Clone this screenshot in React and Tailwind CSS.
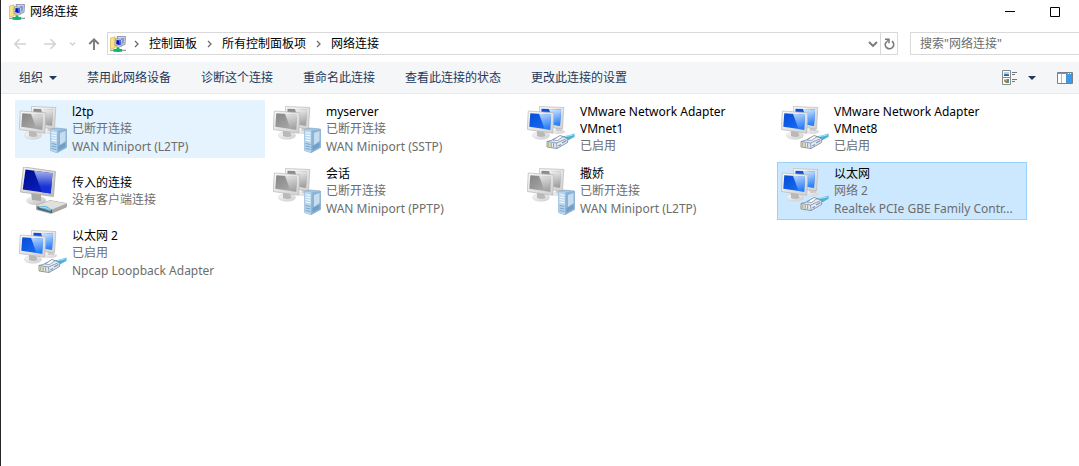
import { useId, useState } from 'react';

const CONNECTIONS = [
  { id: 1, name: 'l2tp', lines: ['已断开连接', 'WAN Miniport (L2TP)'], kind: 'vpn' },
  { id: 2, name: 'myserver', lines: ['已断开连接', 'WAN Miniport (SSTP)'], kind: 'vpn' },
  { id: 3, name: 'VMware Network Adapter VMnet1', lines: ['已启用'], kind: 'lan' },
  { id: 4, name: 'VMware Network Adapter VMnet8', lines: ['已启用'], kind: 'lan' },
  { id: 5, name: '传入的连接', lines: ['没有客户端连接'], kind: 'incoming' },
  { id: 6, name: '会话', lines: ['已断开连接', 'WAN Miniport (PPTP)'], kind: 'vpn' },
  { id: 7, name: '撒娇', lines: ['已断开连接', 'WAN Miniport (L2TP)'], kind: 'vpn' },
  { id: 8, name: '以太网', lines: ['网络 2', 'Realtek PCIe GBE Family Contr...'], kind: 'lan' },
  { id: 9, name: '以太网 2', lines: ['已启用', 'Npcap Loopback Adapter'], kind: 'lan' },
];

const COMMANDS = ['禁用此网络设备', '诊断这个连接', '重命名此连接', '查看此连接的状态', '更改此连接的设置'];

const CRUMBS = ['控制面板', '所有控制面板项', '网络连接'];

function NetworkIcon() {
  return (
    <svg width="16" height="16" viewBox="0 0 16 16" className="shrink-0">
      <path d="M.5 2 5 .8V12L.5 12.800z" fill="#f8e38a" stroke="#d9b54b" strokeWidth=".7" />
      <path d="M5 2h3v9.500H5z" fill="#f3d768" />
      <path d="M7 .5h8.500L15 8.500 10 10z" fill="#ccd3e6" stroke="#8089a3" strokeWidth=".8" />
      <path d="M11 2h3.200l-.5 5.500H11z" fill="#8a9ad6" />
      <path d="M5.300 2.800 12.200 3.500 11.600 10.500 5 9.500z" fill="#e3e6ee" stroke="#8b93a3" strokeWidth=".8" />
      <path d="M6.500 4 11 4.500 10.500 9.200 6.200 8.300z" fill="#0b12c0" />
      <path d="M8.800 4.300 11 4.500 10.500 9.200 9.600 9z" fill="#3b73ec" />
      <path d="M0 14.400h16" stroke="#9aa4aa" strokeWidth="1.400" />
      <path d="M3.500 13h8.500v2.800H3.500zM6.500 11.300h3V16h-3z" fill="#0fb868" />
    </svg>
  );
}

function Monitors({ id, off }) {
  return (
    <>
      <defs>
        <linearGradient id={id + 's'} x1="0" y1="0" x2="1" y2="1">
          <stop offset="0" stopColor={off ? '#858585' : '#0a4bd6'} />
          <stop offset="1" stopColor={off ? '#b0b0b0' : '#1672fb'} />
        </linearGradient>
        <linearGradient id={id + 'g'} x1="0" y1="0" x2="0.2" y2="1">
          <stop offset="0" stopColor={off ? '#f2f2f2' : '#d9ecff'} />
          <stop offset="1" stopColor={off ? '#a2a2a2' : '#2c80f8'} />
        </linearGradient>
        <linearGradient id={id + 'f'} x1="0" y1="0" x2="1" y2="1">
          <stop offset="0" stopColor="#fafafa" />
          <stop offset="1" stopColor="#cfcfcf" />
        </linearGradient>
      </defs>
      <ellipse cx="31" cy="26.500" rx="7" ry="2.500" fill={`url(#${id}f)`} />
      <path d="M28 21h6l1 5h-6z" fill="#cecece" />
      <path d="M12.500 1.500 36.800 2.500 35.500 24 13 21z" fill={`url(#${id}f)`} stroke="#b9b9b9" strokeWidth=".7" />
      <path d="M14.500 3.700 34 4.500 33 20.800 14 18z" fill={`url(#${id}s)`} />
      <path d="M22 4 34 4.500 33 20.800 27 20z" fill={`url(#${id}g)`} />
      <ellipse cx="14" cy="30.500" rx="8.500" ry="3.800" fill={`url(#${id}f)`} stroke="#cdcdcd" strokeWidth=".5" />
      <path d="M10 25l7 1 1.500 5c-3 1.500-6 1-8.500 0z" fill="#b9b9b9" />
      <path d="M1.300 6 26.800 7.800 25.800 28.300.3 24.500z" fill={`url(#${id}f)`} stroke="#b9b9b9" strokeWidth=".7" />
      <path d="M3.300 8.200 24 9.700 23.200 24.800 2.300 21.800z" fill={`url(#${id}s)`} />
      <path d="M12 8.800 24 9.700 23.200 24.800 17.500 24z" fill={`url(#${id}g)`} opacity=".85" />
    </>
  );
}

function VpnIcon() {
  const id = useId();
  return (
    <svg width="48" height="48" viewBox="0 0 48 48" className="shrink-0">
      <Monitors id={id} off />
      <path d="M31.500 24.500 37 23 47.500 24 47.500 42.500 38 47.700 31.500 45.500z" fill="#a3c5e0" stroke="#7ba2c4" strokeWidth=".6" />
      <path d="M31.500 24.500 38.500 25.500 38 47.700 31.500 45.500z" fill="#b7d6ed" />
      <path d="M38.500 25.500 47.500 24 47.500 42.500 38 47.700z" fill="#8ab3d6" />
      <path d="M41 28 46.500 26v10L41 40z" fill="#d0e4f3" opacity=".85" />
      <path d="M32.500 27.500l5 .8M32.500 30l5 .8M32.500 32.500l5 .8M32.500 35l5 .8" stroke="#f4fafe" strokeWidth="1.200" />
      <path d="M32.500 38.500l5 1M32.500 41l5 1M32.500 43.500l5 1" stroke="#6797c0" strokeWidth=".8" />
      <path d="M39.500 41 46.500 37.500v4l-7 4z" fill="#5787b5" opacity=".5" />
    </svg>
  );
}

function LanIcon() {
  const id = useId();
  return (
    <svg width="48" height="48" viewBox="0 0 48 48" className="shrink-0">
      <Monitors id={id} />
      <path d="M35 31.500c4-.5 8-1.500 12.500-3v3.500c-2.500.8-4 2.500-7.500 3.500z" fill="#4bb4da" />
      <path d="M38 31.500c3-.3 6-1 8.500-1.800" stroke="#b0e6f6" strokeWidth="1" fill="none" />
      <path d="M20 36.500 24 35.500 33 31 41 33 40.500 37.500 30 43.500 20 42z" fill="#e2eaf3" stroke="#71829f" strokeWidth=".8" />
      <path d="M20 36.500 29.500 38 41 33M29.500 38 30 43.500" fill="none" stroke="#71829f" strokeWidth=".7" />
      <path d="M26 35 33 30.500 36 31.500 30.500 35.500z" fill="#fff" stroke="#71829f" strokeWidth=".7" />
      <path d="M21.800 37.500v4M24.200 38v4M26.600 38.300v4" stroke="#b1a847" strokeWidth="1.100" />
      <path d="M31.500 41 34 39.500M35 38 39.500 35.500" stroke="#8296b3" strokeWidth="1.400" />
    </svg>
  );
}

function IncomingIcon() {
  const id = useId();
  return (
    <svg width="48" height="48" viewBox="0 0 48 48" className="shrink-0">
      <defs>
        <linearGradient id={id + 's'} x1="0" y1="0" x2="1" y2="1">
          <stop offset="0" stopColor="#000b88" />
          <stop offset="1" stopColor="#0b24d2" />
        </linearGradient>
        <linearGradient id={id + 'g'} x1="0" y1="0" x2="0" y2="1">
          <stop offset="0" stopColor="#c3cef7" />
          <stop offset=".7" stopColor="#1a35da" />
        </linearGradient>
        <linearGradient id={id + 'f'} x1="0" y1="0" x2="1" y2="1">
          <stop offset="0" stopColor="#f6f6f4" />
          <stop offset="1" stopColor="#b9b9b7" />
        </linearGradient>
      </defs>
      <ellipse cx="17" cy="33.500" rx="10" ry="4.500" fill={`url(#${id}f)`} />
      <path d="M12 25 22 27 22 34 13 33z" fill="#a9a9a7" />
      <path d="M4.500 0 36.500 4.500 34.500 29.500 1.500 25z" fill={`url(#${id}f)`} stroke="#a5a5a3" strokeWidth=".7" />
      <path d="M6.500 2.500 33.500 6.200 31.800 26.500 3.800 22.500z" fill={`url(#${id}s)`} />
      <path d="M15 3.700 33.500 6.200 31.800 26.500 23 25.200z" fill={`url(#${id}g)`} opacity=".85" />
      <path d="M17.500 38.500 31 33.500 47.500 36.500 47.500 40 32 46.500 17.500 42.500z" fill="#a9a9a7" stroke="#8e8e8c" strokeWidth=".6" />
      <path d="M17.500 38.500 31 33.500 47.500 36.500 33 42.500z" fill="#e0e0de" />
      <path d="M18.500 39.500 33 42.800V46L18.500 42.300z" fill="#41606f" />
      <path d="M19.500 40.500c4-2.500 8-2.500 12.500 2v2z" fill="#67b6dc" />
      <path d="M21.500 40.500c3-1 6 .2 9 2" stroke="#cdeaf5" strokeWidth=".8" fill="none" />
    </svg>
  );
}

const ICONS = { vpn: VpnIcon, lan: LanIcon, incoming: IncomingIcon };

function Chevron() {
  return (
    <svg width="5" height="8" viewBox="0 0 5 8" className="shrink-0">
      <path d="M1 1l3 3-3 3" fill="none" stroke="#6b6b6b" strokeWidth="1.300" />
    </svg>
  );
}

function Caret() {
  return (
    <svg width="8" height="4" viewBox="0 0 8 4">
      <path d="M0 0h8L4 4z" fill="#1e395b" />
    </svg>
  );
}

function Connection({ item, hovered, selected, onSelect }) {
  const Icon = ICONS[item.kind];
  let state = 'border-transparent';
  if (hovered) state = 'border-[#e5f3ff] bg-[#e5f3ff]';
  if (selected) state = 'border-[#99d1ff] bg-[#cce8ff]';

  return (
    <li>
      <button
        onClick={onSelect}
        aria-pressed={selected}
        className={`flex h-[58px] w-[250px] items-center gap-[5px] border pl-[3px] pr-1 text-left ${state}`}
      >
        <Icon />
        <span className="min-w-0 flex-1">
          <span className="block leading-[17px] text-black">{item.name}</span>
          {item.lines.map((line) => (
            <span key={line} className="block whitespace-nowrap leading-[18px] text-[#6d6d6d]">{line}</span>
          ))}
        </span>
      </button>
    </li>
  );
}

export default function App() {
  const [selected, setSelected] = useState(8);

  return (
    <div className="min-h-screen border-l border-[#26262b] bg-white font-['Noto_Sans','Noto_Sans_CJK_SC',sans-serif] text-[12px] text-black">
      <header className="flex h-6 items-center justify-between pl-2 pr-[2px]">
        <div className="flex items-center gap-[5px]">
          <NetworkIcon />
          <h1>网络连接</h1>
        </div>
        <div className="flex">
          <button aria-label="最小化" className="flex h-6 w-[45px] items-center justify-center">
            <svg width="10" height="10" viewBox="0 0 10 10"><path d="M0 4.500h10" stroke="#000" /></svg>
          </button>
          <button aria-label="最大化" className="flex h-6 w-[45px] items-center justify-center">
            <svg width="10" height="10" viewBox="0 0 10 10"><path d="M.5.500h9v9h-9z" fill="none" stroke="#000" /></svg>
          </button>
        </div>
      </header>

      <nav className="flex items-center pb-[7px] pl-3 pt-2">
        <div className="flex w-[94px] items-center">
          <button aria-label="后退">
            <svg width="14" height="12" viewBox="0 0 14 12"><path d="M13 6H2M6.500 1.300 1.800 6l4.700 4.700" fill="none" stroke="#d2d2d2" strokeWidth="1.600" /></svg>
          </button>
          <button aria-label="前进" className="ml-4">
            <svg width="14" height="12" viewBox="0 0 14 12"><path d="M1 6h11M7.500 1.300 12.200 6l-4.700 4.700" fill="none" stroke="#d2d2d2" strokeWidth="1.600" /></svg>
          </button>
          <button aria-label="最近浏览的位置" className="ml-3">
            <svg width="7" height="6" viewBox="0 0 7 6"><path d="M1 1.500l2.500 2.500L6 1.500" fill="none" stroke="#d2d2d2" strokeWidth="1.500" /></svg>
          </button>
          <button aria-label="向上" className="ml-3">
            <svg width="12" height="14" viewBox="0 0 12 14"><path d="M6 13V2.500M1.300 7 6 2.300 10.700 7" fill="none" stroke="#7a7a7a" strokeWidth="1.900" /></svg>
          </button>
        </div>

        <div className="flex h-[23px] min-w-0 flex-1 items-center border border-[#d9d9d9] pl-[2px]">
          <NetworkIcon />
          <ol className="flex min-w-0 flex-1">
            {CRUMBS.map((crumb, i) => (
              <li key={crumb} className={`flex items-center gap-[10px] ${i === 0 ? 'pl-2' : 'pl-[10px]'}`}>
                <Chevron />
                <a href="#" className="whitespace-nowrap">{crumb}</a>
              </li>
            ))}
          </ol>
          <button aria-label="以前的位置" className="px-[2px]">
            <svg width="10" height="8" viewBox="0 0 10 8"><path d="M1 2l4 4 4-4" fill="none" stroke="#7a7a7a" strokeWidth="1.900" /></svg>
          </button>
          <button aria-label="刷新" className="flex h-full w-[17px] items-center justify-center border-l border-[#d9d9d9]">
            <svg width="11" height="12" viewBox="0 0 11 12">
              <path d="M8 3.200A4.200 4.200 0 1 1 2 4.200" fill="none" stroke="#7a7a7a" strokeWidth="1.700" />
              <path d="M1 1.300h4v4" fill="none" stroke="#7a7a7a" strokeWidth="1.500" />
              <path d="M2 4.500 4.500 2" stroke="#7a7a7a" strokeWidth="1.200" />
            </svg>
          </button>
        </div>

        <input
          type="search"
          aria-label="搜索"
          placeholder={'搜索"网络连接"'}
          className="ml-3 h-[23px] w-[169px] border border-r-0 border-[#d9d9d9] pl-[9px] outline-none placeholder:text-[#6d6d6d]"
        />
      </nav>

      <div className="flex h-8 items-center border-b border-[#e8e9eb] bg-[#f5f6f7] pl-[18px] pr-[6px] text-[#1e395b]">
        <div className="flex min-w-0 flex-1 items-center gap-[30px]">
          <button className="flex items-center gap-[6px] whitespace-nowrap">
            组织
            <Caret />
          </button>
          {COMMANDS.map((command) => (
            <button key={command} className="whitespace-nowrap">{command}</button>
          ))}
        </div>
        <button aria-label="更改视图">
          <svg width="16" height="16" viewBox="0 0 16 16">
            <path d="M.5.500h8v7h-8zM.5 7.500h8v7h-8z" fill="#fff" stroke="#8a8a8a" />
            <path d="M2 2h5v4H2z" fill="#a9d5f5" />
            <path d="M2 4.500 4 4l3 .5V6H2z" fill="#28619c" />
            <path d="M2 9.500h2.500V12H2z" fill="#e0843c" />
            <path d="M4.500 9H7v2H4.500z" fill="#4b83c9" />
            <path d="M3.500 11H7v2H3.500z" fill="#56a04d" />
            <path d="M10 2.500h5M10 4.500h3M10 9.500h5M10 11.500h3" stroke="#777" />
          </svg>
        </button>
        <button aria-label="更多选项" className="ml-[10px]">
          <Caret />
        </button>
        <button aria-label="预览窗格" className="ml-[21px]">
          <svg width="16" height="12" viewBox="0 0 16 12">
            <path d="M.5.500h15v11H.5z" fill="#fff" stroke="#7b8087" />
            <path d="M1 1h14v1H1z" fill="#8b9097" />
            <path d="M4.500 2v9" stroke="#b5b9be" />
            <path d="M9 2h6v9H9z" fill="#3f98e4" />
            <path d="M11 1h1v1h-1zM13 1h1v1h-1z" fill="#fff" />
          </svg>
        </button>
      </div>

      <main className="pl-[14px] pt-[6px]">
        <ul className="flex flex-wrap gap-1">
          {CONNECTIONS.map((item) => (
            <Connection
              key={item.id}
              item={item}
              hovered={item.id === 1}
              selected={item.id === selected}
              onSelect={() => setSelected(item.id)}
            />
          ))}
        </ul>
      </main>
    </div>
  );
}
